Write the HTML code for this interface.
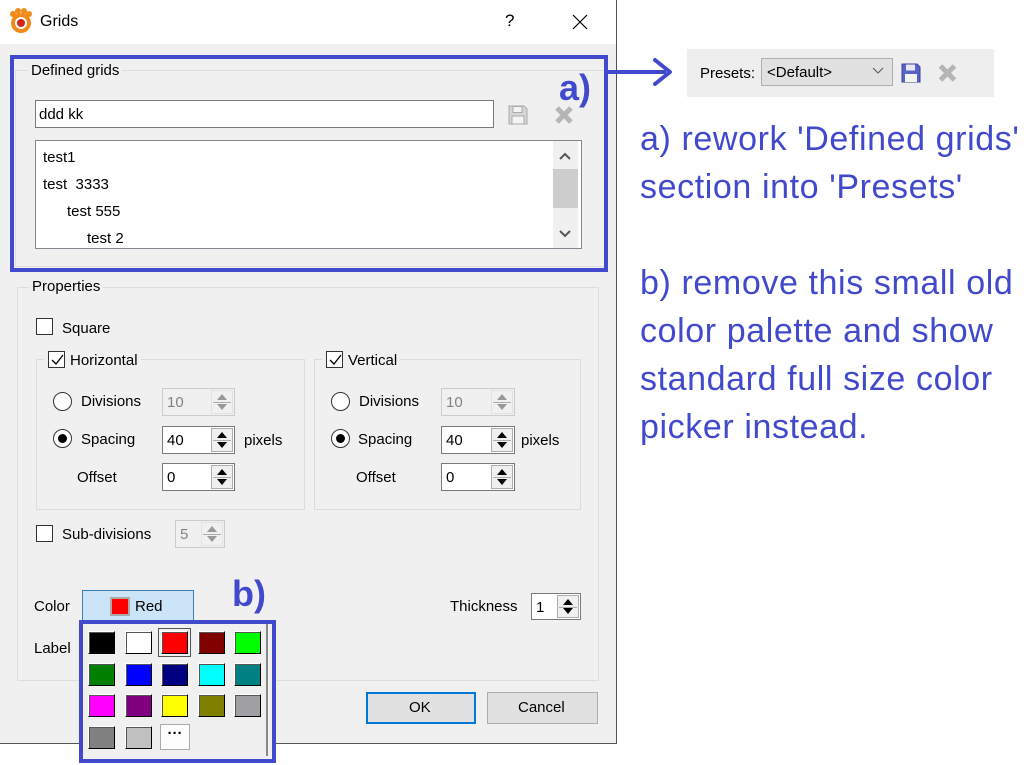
<!DOCTYPE html>
<html><head><meta charset="utf-8"><style>
*{box-sizing:border-box;margin:0;padding:0}
body{width:1034px;height:765px;background:#fff;position:relative;overflow:hidden;font-family:"Liberation Sans",sans-serif;font-size:15px;color:#000}
.a{position:absolute}
.t{position:absolute;white-space:nowrap;line-height:18px}
.gb{position:absolute;border:1px solid #dcdcdc}
.lbl{position:absolute;background:#f0f0f0;padding:0 3px;line-height:18px;white-space:nowrap}
.cb{position:absolute;width:17px;height:17px;border:1px solid #333;background:#fff}
.rd{position:absolute;width:19px;height:19px;border:1px solid #333;border-radius:50%;background:#fff}
.sp{position:absolute;border:1px solid #7a7a7a;background:#fff;height:28px}
.sp.d{border-color:#ccc;background:#f0f0f0;color:#838383}
.sp span{position:absolute;left:4px;top:5px}
.sb{position:absolute;right:1px;top:1px;bottom:1px;width:22px;border:1px solid #adadad;background:#f0f0f0}
.sb::before{content:"";position:absolute;left:5px;top:3px;border:5px solid transparent;border-bottom:6px solid #000;border-top:0}
.sb::after{content:"";position:absolute;left:5px;bottom:3px;border:5px solid transparent;border-top:6px solid #000;border-bottom:0}
.sb i{position:absolute;left:1px;right:1px;top:50%;height:1px;background:#adadad}
.d .sb{border-color:#e3e3e3}
.d .sb::before{border-bottom-color:#999}.d .sb::after{border-top-color:#999}
.sw{position:absolute;width:27px;height:23px;border:1px solid #000;border-top-color:#fff;border-left-color:#fff;box-shadow:inset 1px 1px 0 #555}
.an{position:absolute;left:640px;color:#4149cc;font-size:34px;line-height:48px;white-space:nowrap;letter-spacing:0.6px}
</style></head><body>
<div class="a" style="left:0;top:0;width:617px;height:744px;background:#f0f0f0;border-right:1px solid #555;border-bottom:1px solid #555"></div>
<div class="a" style="left:0;top:0;width:616px;height:44px;background:#fff"></div>
<svg class="a" style="left:9px;top:8px" width="24" height="26" viewBox="0 0 24 26"><g fill="#f08a1a"><circle cx="12" cy="15" r="10"/><circle cx="4" cy="6" r="3"/><circle cx="9" cy="3" r="3"/><circle cx="15" cy="3" r="3"/><circle cx="20" cy="6" r="3"/></g><circle cx="12" cy="15" r="6" fill="#fff"/><circle cx="12" cy="15" r="4" fill="#d0261c"/></svg>
<div class="t" style="left:40px;top:13px;font-size:16px">Grids</div>
<div class="t" style="left:505px;top:12px;font-size:17px">?</div>
<svg class="a" style="left:572px;top:14px" width="16" height="16"><path d="M1 1L15 15M15 1L1 15" stroke="#000" stroke-width="1.2"/></svg>

<div class="gb" style="left:15px;top:70px;width:590px;height:197px"></div>
<div class="lbl" style="left:28px;top:62px">Defined grids</div>
<div class="a" style="left:35px;top:100px;width:459px;height:28px;border:1px solid #7a7a7a;background:#fff"></div>
<div class="t" style="left:39px;top:106px">ddd kk</div>
<svg class="a" style="left:508px;top:105px" width="20" height="20" viewBox="0 0 20 20"><path d="M1 1h15l3 3v15H1z" fill="#d6d6d6" stroke="#aaa"/><rect x="5" y="1.5" width="9" height="6" fill="#f4f4f4" stroke="#aaa"/><rect x="4" y="11" width="12" height="8" fill="#f4f4f4" stroke="#aaa"/></svg>
<svg class="a" style="left:554px;top:105px" width="20" height="20" viewBox="0 0 20 20"><path d="M3 3L17 17M17 3L3 17" stroke="#b5b5b5" stroke-width="5"/></svg>
<div class="a" style="left:35px;top:140px;width:547px;height:109px;border:1px solid #828790;background:#fff"></div>
<div class="a" style="left:553px;top:141px;width:25px;height:107px;background:#f0f0f0"></div>
<div class="a" style="left:553px;top:169px;width:25px;height:39px;background:#cdcdcd"></div>
<svg class="a" style="left:559px;top:151px" width="12" height="90"><path d="M1 8L6 3L11 8M1 80L6 85L11 80" stroke="#555" stroke-width="2" fill="none"/></svg>
<div class="t" style="left:43px;top:149px">test1</div>
<div class="t" style="left:43px;top:176px">test&nbsp; 3333</div>
<div class="t" style="left:67px;top:203px">test 555</div>
<div class="t" style="left:87px;top:230px">test 2</div>
<div class="a" style="left:10px;top:55px;width:598px;height:217px;border:4px solid #4149cc"></div>
<div class="t" style="left:559px;top:70px;font-size:36px;font-weight:bold;color:#4149cc;line-height:36px">a)</div>

<div class="gb" style="left:17px;top:287px;width:582px;height:394px"></div>
<div class="lbl" style="left:29px;top:278px">Properties</div>
<div class="cb" style="left:36px;top:318px"></div><div class="t" style="left:62px;top:320px">Square</div>

<div class="gb" style="left:36px;top:359px;width:269px;height:151px"></div>
<div class="lbl" style="left:44px;top:352px;padding-left:26px">Horizontal</div>
<div class="cb" style="left:48px;top:351px"></div>
<svg class="a" style="left:50px;top:353px" width="14" height="14"><path d="M2 7l4 4 7-9" stroke="#000" fill="none" stroke-width="1.3"/></svg>
<div class="rd" style="left:53px;top:392px"></div><div class="t" style="left:81px;top:393px">Divisions</div>
<div class="sp d" style="left:162px;top:388px;width:73px"><span>10</span><div class="sb"><i></i></div></div>
<div class="rd" style="left:53px;top:429px"></div><div class="a" style="left:58px;top:434px;width:9px;height:9px;border-radius:50%;background:#000"></div><div class="t" style="left:81px;top:431px">Spacing</div>
<div class="sp" style="left:162px;top:426px;width:73px"><span>40</span><div class="sb"><i></i></div></div>
<div class="t" style="left:244px;top:432px">pixels</div>
<div class="t" style="left:77px;top:469px">Offset</div>
<div class="sp" style="left:162px;top:463px;width:73px"><span>0</span><div class="sb"><i></i></div></div>

<div class="gb" style="left:314px;top:359px;width:267px;height:151px"></div>
<div class="lbl" style="left:322px;top:352px;padding-left:26px">Vertical</div>
<div class="cb" style="left:326px;top:351px"></div>
<svg class="a" style="left:328px;top:353px" width="14" height="14"><path d="M2 7l4 4 7-9" stroke="#000" fill="none" stroke-width="1.3"/></svg>
<div class="rd" style="left:331px;top:392px"></div><div class="t" style="left:359px;top:393px">Divisions</div>
<div class="sp d" style="left:441px;top:388px;width:74px"><span>10</span><div class="sb"><i></i></div></div>
<div class="rd" style="left:331px;top:429px"></div><div class="a" style="left:336px;top:434px;width:9px;height:9px;border-radius:50%;background:#000"></div><div class="t" style="left:358px;top:431px">Spacing</div>
<div class="sp" style="left:441px;top:426px;width:74px"><span>40</span><div class="sb"><i></i></div></div>
<div class="t" style="left:521px;top:432px">pixels</div>
<div class="t" style="left:356px;top:469px">Offset</div>
<div class="sp" style="left:441px;top:463px;width:74px"><span>0</span><div class="sb"><i></i></div></div>

<div class="cb" style="left:36px;top:525px"></div><div class="t" style="left:62px;top:526px">Sub-divisions</div>
<div class="sp d" style="left:175px;top:520px;width:50px"><span>5</span><div class="sb"><i></i></div></div>

<div class="t" style="left:34px;top:598px">Color</div>
<div class="a" style="left:82px;top:590px;width:112px;height:31px;background:#cce4f7;border:1px solid #3c7fb1"></div>
<div class="a" style="left:110px;top:597px;width:20px;height:19px;background:#ff0000;border:2px solid #aaa"></div>
<div class="t" style="left:135px;top:598px">Red</div>
<div class="t" style="left:232px;top:574px;font-size:36px;font-weight:bold;color:#4149cc;line-height:40px">b)</div>
<div class="t" style="left:450px;top:598px">Thickness</div>
<div class="sp" style="left:531px;top:593px;width:50px;height:27px"><span>1</span><div class="sb"><i></i></div></div>
<div class="t" style="left:34px;top:640px">Label</div>

<div class="a" style="left:366px;top:692px;width:110px;height:32px;background:#e1e1e1;border:2px solid #0078d7"></div>
<div class="t" style="left:409px;top:699px">OK</div>
<div class="a" style="left:487px;top:692px;width:111px;height:32px;background:#e1e1e1;border:1px solid #adadad"></div>
<div class="t" style="left:518px;top:699px">Cancel</div>

<div class="a" style="left:79px;top:620px;width:197px;height:143px;background:#f0f0f0;border:4px solid #4149cc"></div>
<div class="a" style="left:266px;top:624px;width:2px;height:132px;background:#888"></div>
<div class="sw" style="left:88px;top:631px;background:#000"></div>
<div class="sw" style="left:125px;top:631px;background:#fff"></div>
<div class="a" style="left:158px;top:628px;width:33px;height:29px;border:1px solid #555"></div>
<div class="sw" style="left:161px;top:631px;background:#ff0000"></div>
<div class="sw" style="left:198px;top:631px;background:#800000"></div>
<div class="sw" style="left:234px;top:631px;background:#00ff00"></div>
<div class="sw" style="left:88px;top:663px;background:#008000"></div>
<div class="sw" style="left:125px;top:663px;background:#0000ff"></div>
<div class="sw" style="left:161px;top:663px;background:#000080"></div>
<div class="sw" style="left:198px;top:663px;background:#00ffff"></div>
<div class="sw" style="left:234px;top:663px;background:#008080"></div>
<div class="sw" style="left:88px;top:694px;background:#ff00ff"></div>
<div class="sw" style="left:125px;top:694px;background:#800080"></div>
<div class="sw" style="left:161px;top:694px;background:#ffff00"></div>
<div class="sw" style="left:198px;top:694px;background:#808000"></div>
<div class="sw" style="left:234px;top:694px;background:#a0a0a4"></div>
<div class="sw" style="left:88px;top:726px;background:#808080"></div>
<div class="sw" style="left:125px;top:726px;background:#c0c0c0"></div>
<div class="a" style="left:160px;top:724px;width:30px;height:26px;background:#fdfdfd;border:1px solid #aaa;text-align:center;font-weight:bold;line-height:18px">···</div>

<div class="a" style="left:606px;top:70px;width:60px;height:4px;background:#4149cc"></div>
<svg class="a" style="left:652px;top:57px" width="22" height="30"><path d="M3 3L18 15L3 27" stroke="#4149cc" stroke-width="4" fill="none" stroke-linecap="round" stroke-linejoin="round"/></svg>

<div class="a" style="left:687px;top:49px;width:307px;height:48px;background:#eeeeee"></div>
<div class="t" style="left:700px;top:65px">Presets:</div>
<div class="a" style="left:761px;top:58px;width:132px;height:28px;background:#e1e1e1;border:1px solid #adadad"></div>
<div class="t" style="left:767px;top:64px">&lt;Default&gt;</div>
<svg class="a" style="left:872px;top:67px" width="12" height="8"><path d="M1 1l5 5 5-5" stroke="#555" fill="none"/></svg>
<svg class="a" style="left:901px;top:63px" width="20" height="20" viewBox="0 0 20 20"><path d="M1 1h15l3 3v15H1z" fill="#5a63c8" stroke="#3a42a0"/><rect x="5" y="1.5" width="9" height="6" fill="#e8e8f4"/><rect x="4" y="11" width="12" height="8" fill="#f4f4f4"/></svg>
<svg class="a" style="left:937px;top:63px" width="21" height="20" viewBox="0 0 20 20"><path d="M3 3L17 17M17 3L3 17" stroke="#b5b5b5" stroke-width="5"/></svg>

<div class="an" style="top:115px">a) rework 'Defined grids'</div>
<div class="an" style="top:163px">section into 'Presets'</div>
<div class="an" style="top:259px">b) remove this small old</div>
<div class="an" style="top:307px">color palette and show</div>
<div class="an" style="top:355px">standard full size color</div>
<div class="an" style="top:403px">picker instead.</div>
</body></html>
